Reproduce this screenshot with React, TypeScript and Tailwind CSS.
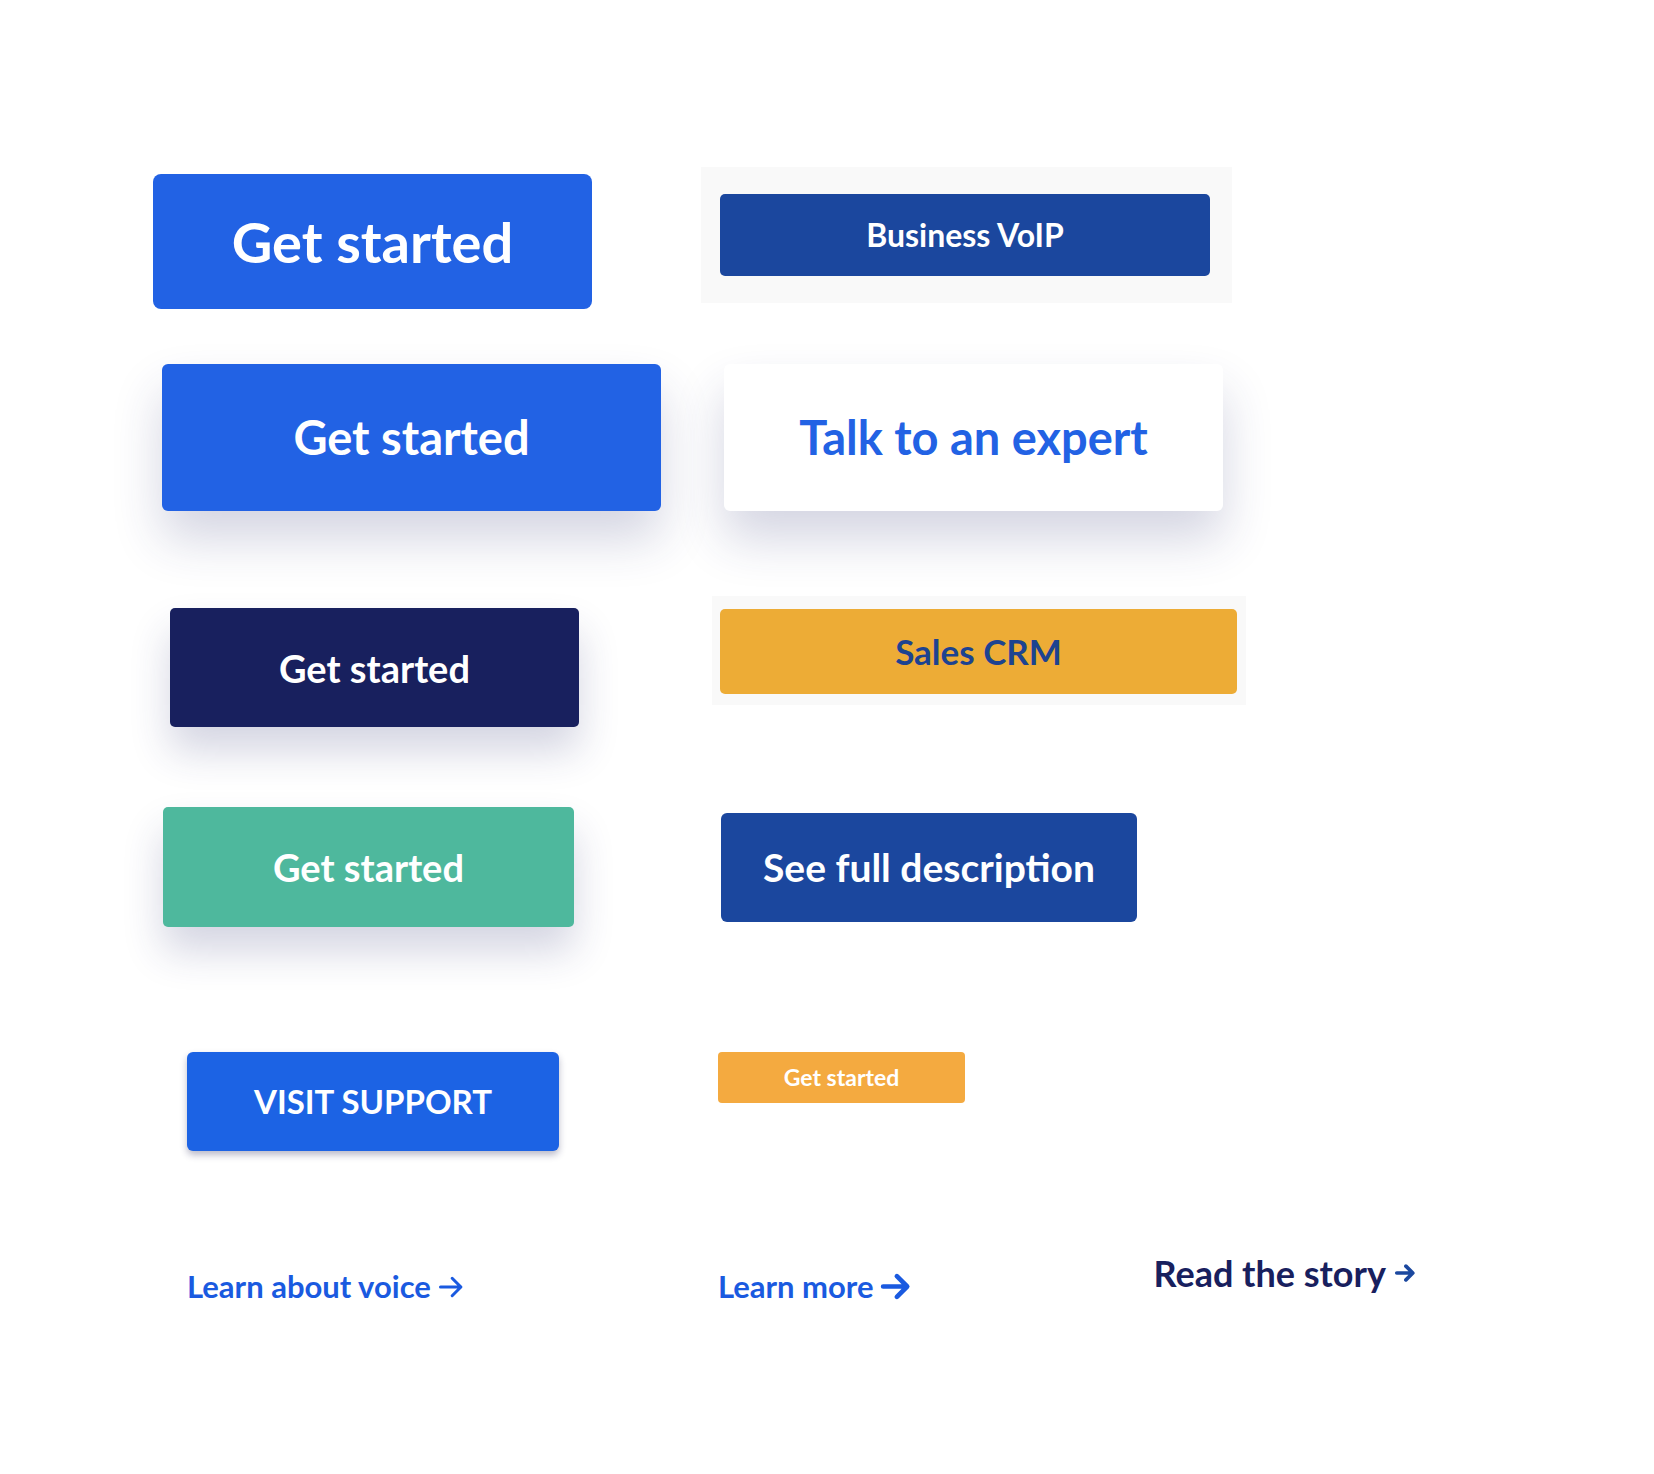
import React from "react";

const font = { fontFamily: "Lato, 'Open Sans', sans-serif" };

const Arrow = ({ className = "", w = 24, stroke = 3 }: { className?: string; w?: number; stroke?: number }) => (
  <svg width={w} height={w} viewBox="0 0 24 24" fill="none" className={className}>
    <path d="M3 12h17M13 4.5l7.5 7.5-7.5 7.5" stroke="currentColor" strokeWidth={stroke} strokeLinecap="round" strokeLinejoin="round" />
  </svg>
);

export default function App() {
  return (
    <div className="w-[1654px] h-[1474px] bg-white font-bold" style={font}>
      {/* row 1 */}
      <div className="flex items-start pt-[167px]">
        <button className="ml-[153px] mt-[7px] w-[439px] h-[135px] rounded-lg bg-[#2262e4] text-white text-[56px] leading-none">
          Get started
        </button>
        <div className="ml-[109px] w-[531px] h-[136px] bg-[#f9f9f9] pl-[19px] pt-[27px]">
          <button className="w-[490px] h-[82px] rounded-[5px] bg-[#1b479e] text-white text-[32px] leading-none">
            Business VoIP
          </button>
        </div>
      </div>

      {/* row 2 */}
      <div className="flex items-start mt-[55px]">
        <button className="ml-[162px] w-[499px] h-[147px] rounded-md bg-[#2262e4] text-white text-[47px] leading-none shadow-[0_28px_50px_rgba(40,45,110,0.2)]">
          Get started
        </button>
        <button className="ml-[63px] w-[499px] h-[147px] rounded-md bg-white text-[#2262e4] text-[47px] leading-none shadow-[0_28px_50px_rgba(40,45,110,0.2)]">
          Talk to an expert
        </button>
      </div>

      {/* row 3 */}
      <div className="flex items-start mt-[85px]">
        <button className="ml-[170px] mt-[12px] w-[409px] h-[119px] rounded-[5px] bg-[#18205e] text-white text-[38px] leading-none shadow-[0_24px_40px_rgba(40,45,110,0.2)]">
          Get started
        </button>
        <div className="ml-[133px] w-[534px] h-[109px] bg-[#f9f9f9] pl-[8px] pt-[13px]">
          <button className="w-[517px] h-[85px] rounded-[5px] bg-[#edac36] text-[#1d4390] text-[35px] leading-none">
            Sales CRM
          </button>
        </div>
      </div>

      {/* row 4 */}
      <div className="flex items-start mt-[80px]">
        <button className="ml-[163px] w-[411px] h-[120px] rounded-[5px] bg-[#4eb89d] text-white text-[38px] leading-none shadow-[0_24px_40px_rgba(40,45,110,0.2)]">
          Get started
        </button>
        <button className="ml-[147px] mt-[6px] w-[416px] h-[109px] rounded-md bg-[#1b479e] text-white text-[39px] leading-none">
          See full description
        </button>
      </div>

      {/* row 5 */}
      <div className="flex items-start mt-[125px]">
        <button className="ml-[187px] w-[372px] h-[99px] rounded-md bg-[#1c63e4] text-white text-[33px] leading-none shadow-[0_4px_7px_rgba(30,30,80,0.3)]">
          VISIT SUPPORT
        </button>
        <button className="ml-[159px] w-[247px] h-[51px] rounded-[4px] bg-[#f4aa40] text-white text-[23px] leading-none">
          Get started
        </button>
      </div>

      {/* row 6 links */}
      <div className="flex items-start mt-[104px]">
        <a className="ml-[187px] mt-[16px] flex items-center gap-[6px] text-[#1a5ae0] text-[31px] leading-none">
          Learn about voice
          <Arrow w={28} stroke={2.6} />
        </a>
        <a className="ml-[253px] mt-[15px] flex items-center gap-[5px] text-[#1a5ae0] text-[31px] leading-none">
          Learn more
          <Arrow w={33} stroke={3.4} />
        </a>
        <a className="ml-[242px] flex items-center gap-[8px] text-[#18205e] text-[36px] leading-none">
          Read the story
          <Arrow w={22} stroke={4} className="text-[#1b489f]" />
        </a>
      </div>
    </div>
  );
}
